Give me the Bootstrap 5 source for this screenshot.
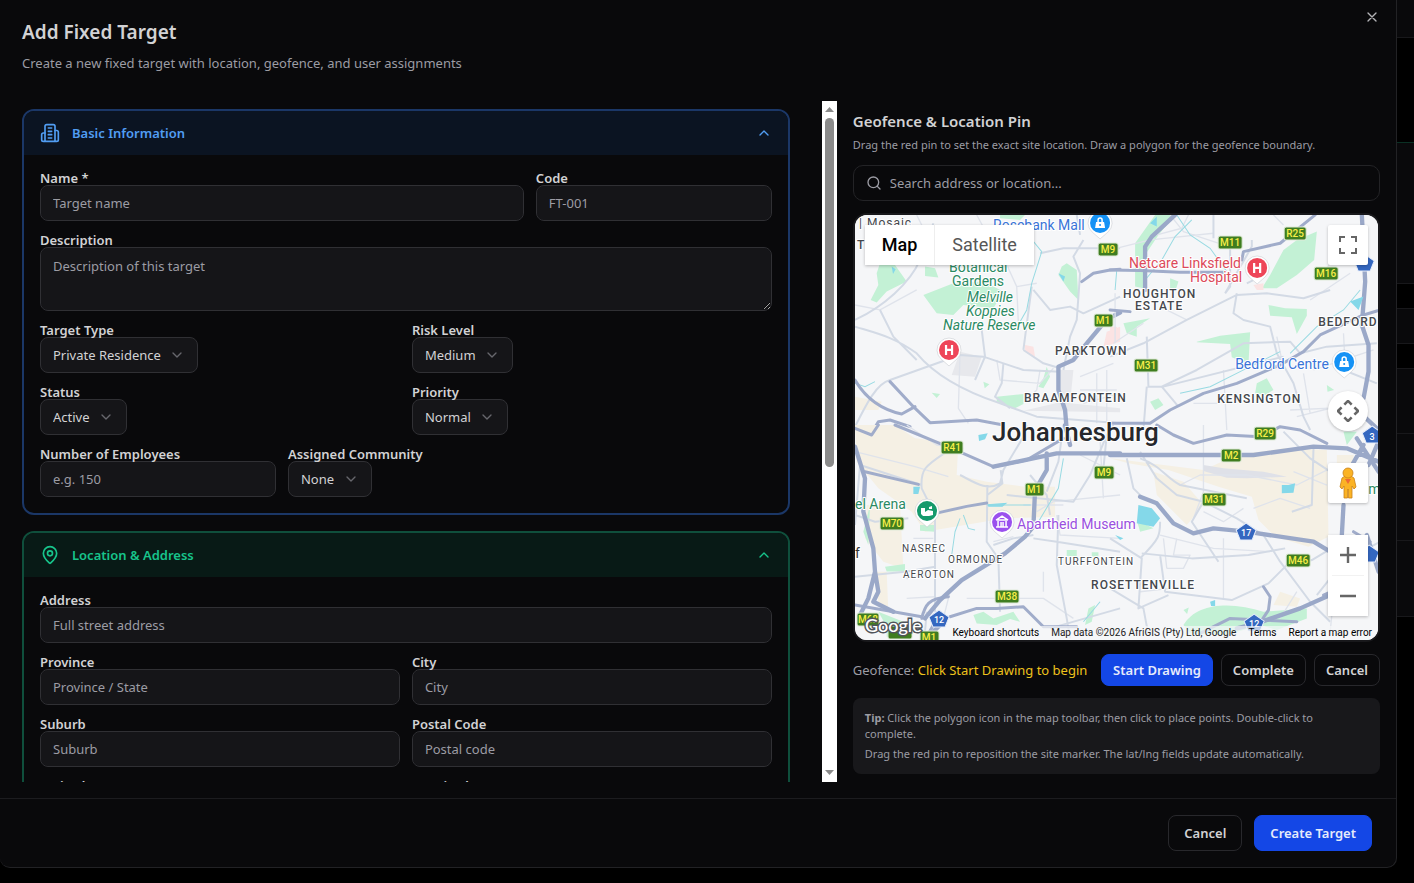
<!DOCTYPE html>
<html lang="en">
<head>
<meta charset="utf-8">
<meta name="viewport" content="width=device-width, initial-scale=1">
<title>Add Fixed Target</title>
<link href="https://cdn.jsdelivr.net/npm/bootstrap@5.3.0/dist/css/bootstrap.min.css" rel="stylesheet">
<style>
  body { background: #000; color: #d2d2d4; font: 13px/20px "Noto Sans", "Open Sans", sans-serif; height: 100vh; overflow: hidden; }
  h1 { font-size: 19px; line-height: 24px; font-weight: 600; }
  h2 { font-size: 15px; line-height: 24px; font-weight: 600; }
  .dialog-box { height: calc(100vh - 15px); min-width: 0; background: #09090b; border: 1px solid #222225; border-width: 0 1px 1px 0; border-radius: 0 0 10px 10px; }
  .dialog-head { padding: 20px 22px 27px; }
  .dialog-head p { line-height: 22px; }
  .dialog-body { min-height: 0; padding: 0 16px 16px 22px; }
  .dialog-foot { border-top: 1px solid #1c1c1f; padding: 16px 24px; gap: 12px; }
  .muted-text { color: #9c9ca4; }
  .small-text { font-size: 11px; line-height: 16px; }
  .close-x { top: 9px; right: 16px; width: 16px; height: 16px; color: #b4b4b8; }
  .form-pane { flex: 0 0 60%; min-width: 0; }
  .form-scroll { overflow-y: auto; scrollbar-width: none; padding: 8px 32px 0 0; min-width: 0; }
  .form-scroll::-webkit-scrollbar { display: none; }
  .map-pane { flex: 0 0 40%; min-width: 0; padding: 8px 0 8px 16px; gap: 12px; }
  .section { border: 2px solid; border-radius: 12px; overflow: hidden; margin-bottom: 16px; }
  .section > button { width: 100%; height: 44px; padding: 0 16px; gap: 12px; border: 0; font-weight: 600; }
  .section-body { padding: 16px; }
  .section-body .row { --bs-gutter-x: 12px; --bs-gutter-y: 12px; }
  .sec-blue { border-color: #1b3767; }
  .sec-blue > button { background: #0b1422; color: #519df2; }
  .sec-green { border-color: #0f4f3c; }
  .sec-green > button { background: #081a16; color: #17c48b; }
  .form-label { display: block; margin: 0; font-weight: 600; line-height: 14px; color: #d2d2d4; white-space: nowrap; }
  .form-control, .form-select { font-size: 13px; line-height: 20px; color: #d2d2d4; background-color: #151518; border: 1px solid #303034; border-radius: 8px; padding: 7px 12px; }
  .form-control::placeholder { color: #9c9ca4; opacity: 1; }
  input.form-control, .form-select { height: 36px; }
  textarea.form-control { height: 64px; padding-top: 8px; }
  .form-select { width: auto; padding-right: 36px; background-position: right 12px center; background-size: 16px 16px; background-image: url("data:image/svg+xml,%3csvg xmlns='http://www.w3.org/2000/svg' viewBox='0 0 24 24' fill='none' stroke='%2367676d' stroke-width='2' stroke-linecap='round' stroke-linejoin='round'%3e%3cpath d='m6 9 6 6 6-6'/%3e%3c/svg%3e"); }
  .search-box { height: 36px; border: 1px solid #232326; border-radius: 10px; padding: 0 12px; gap: 8px; color: #9c9ca4; }
  .search-box input { background: transparent; border: 0; outline: 0; color: #d2d2d4; padding: 0; }
  .search-box input::placeholder { color: #9c9ca4; opacity: 1; }
  .scroll-rail { width: 15px; background: #fff; color: #8b8b8b; }
  .scroll-rail svg { height: 17px; flex: none; }
  .scroll-rail .thumb { height: 54%; width: 9px; border-radius: 5px; background: #8b8b8b; }
  .btn { --bs-btn-font-size: 13px; --bs-btn-line-height: 20px; --bs-btn-font-weight: 600; --bs-btn-border-radius: 8px; --bs-btn-padding-x: 15px; --bs-btn-padding-y: 7px; white-space: nowrap; }
  .tools .btn { --bs-btn-padding-x: 11px; --bs-btn-padding-y: 5px; }
  .btn-line { --bs-btn-color: #d2d2d4; --bs-btn-border-color: #28282c; --bs-btn-hover-color: #fff; --bs-btn-hover-border-color: #444; }
  .btn-go { --bs-btn-color: #e6ebfb; --bs-btn-bg: #1447e6; --bs-btn-border-color: #1447e6; --bs-btn-hover-color: #fff; --bs-btn-hover-bg: #2456f0; }
  .tools { gap: 8px; }
  .warn-text { color: #eec21c; }
  .tip-box { background: #18181b; border-radius: 8px; padding: 12px 24px 12px 12px; }
  .map-frame { min-height: 0; border: 2px solid #18181b; border-radius: 14px; overflow: hidden; background: #f5f6f8; font-family: Roboto, sans-serif; color: #222; }
  .map-frame > svg { width: 100%; height: 100%; display: block; }
  .map-ctl { background: #fff; border: 0; padding: 0; width: 40px; height: 40px; border-radius: 2px; box-shadow: 0 1px 3px rgba(0,0,0,.25); color: #666; display: flex; align-items: center; justify-content: center; }
  .map-type { top: 10px; left: 10px; box-shadow: 0 1px 3px rgba(0,0,0,.25); }
  .map-type button { background: #fff; border: 0; height: 40px; padding: 0 17px; font-size: 18px; color: #565656; }
  .map-type button.on { color: #000; font-weight: 500; border-right: 1px solid #eee; }
  .map-side { top: 10px; right: 10px; bottom: 24px; }
  .map-stack { gap: 32px; }
  .map-zoom { background: #fff; box-shadow: 0 1px 3px rgba(0,0,0,.25); }
  .map-zoom .map-ctl { box-shadow: none; }
  .map-zoom hr { color: #ccc; }
  .map-legal { right: 0; bottom: 0; font-size: 10px; line-height: 14px; background: rgba(245,246,248,.7); padding: 0 6px; gap: 12px; white-space: nowrap; }
  .map-legal a, .map-legal button { color: #000; text-decoration: none; border: 0; background: none; padding: 0; }
  .backdrop { width: 17px; flex: none; }
  .backdrop div { background: #09090b; border-bottom: 1px solid #18181b; }
  .backdrop .dark { background: #000; }
  .areas text { font-size: 12px; font-weight: 500; fill: #44474c; letter-spacing: 1px; }
  .areas .minor { font-size: 10px; font-weight: 400; }
  .halo text { paint-order: stroke; stroke: #fff; stroke-width: 2px; stroke-linejoin: round; }
  .shields rect { fill: #3f7d20; stroke: #dfead8; stroke-width: 1px; }
  .shields text { fill: #f6ee4a; font-size: 10px; font-weight: 500; text-anchor: middle; }
  .pent path { fill: #3467c0; stroke: #e8eefa; stroke-width: 1px; }
  .pent text { fill: #fff; font-size: 9px; font-weight: 500; text-anchor: middle; }
  .places text { font-size: 14px; }
  .road { fill: none; stroke: #d3dae5; stroke-width: 6; stroke-linejoin: round; }
  .thin { fill: none; stroke: #dfe3eb; stroke-width: 4; stroke-linejoin: round; }
  .major { fill: none; stroke: #a0acca; stroke-width: 9; stroke-linejoin: round; stroke-linecap: round; }
  .wide { fill: none; stroke: #9aa8c8; stroke-width: 13; stroke-linejoin: round; stroke-linecap: round; }
  .park { fill: #c3f1d5; }
  .sand { fill: #f5f0e4; }
  .water { fill: #84d8e9; }
  .creek { fill: none; stroke: #98dae2; stroke-width: 3; }
</style>
</head>
<body class="d-flex">

<main class="dialog-box position-relative flex-grow-1 d-flex flex-column" role="dialog" aria-labelledby="dlg-title">
  <button type="button" class="close-x position-absolute border-0 bg-transparent p-0 d-flex" aria-label="Close">
    <svg width="16" height="16" viewBox="0 0 24 24" fill="none" stroke="currentColor" stroke-width="2" stroke-linecap="round"><path d="M18 6 6 18M6 6l12 12"/></svg>
  </button>
  <header class="dialog-head">
    <h1 id="dlg-title" class="mb-2">Add Fixed Target</h1>
    <p class="muted-text mb-0">Create a new fixed target with location, geofence, and user assignments</p>
  </header>

  <div class="dialog-body d-flex flex-grow-1">
    <div class="form-pane d-flex">
      <form id="target-form" class="form-scroll flex-grow-1">
        <section class="section sec-blue">
          <button type="button" class="d-flex align-items-center" aria-expanded="true">
            <svg width="20" height="20" viewBox="0 0 24 24" fill="none" stroke="currentColor" stroke-width="2" stroke-linecap="round" stroke-linejoin="round"><path d="M6 22V4a2 2 0 0 1 2-2h8a2 2 0 0 1 2 2v18Z"/><path d="M6 12H4a2 2 0 0 0-2 2v6a2 2 0 0 0 2 2h2M18 9h2a2 2 0 0 1 2 2v9a2 2 0 0 1-2 2h-2M10 6h4M10 10h4M10 14h4M10 18h4"/></svg>
            <span>Basic Information</span>
            <svg class="ms-auto" width="16" height="16" viewBox="0 0 24 24" fill="none" stroke="currentColor" stroke-width="2" stroke-linecap="round" stroke-linejoin="round"><path d="m18 15-6-6-6 6"/></svg>
          </button>
          <div class="section-body">
            <div class="row">
              <div class="col-8"><label class="form-label" for="f-name">Name *</label><input id="f-name" class="form-control" placeholder="Target name"></div>
              <div class="col-4"><label class="form-label" for="f-code">Code</label><input id="f-code" class="form-control" placeholder="FT-001"></div>
              <div class="col-12"><label class="form-label" for="f-desc">Description</label><textarea id="f-desc" class="form-control d-block" placeholder="Description of this target"></textarea></div>
              <div class="col-6"><label class="form-label" for="f-type">Target Type</label><select id="f-type" class="form-select"><option>Private Residence</option></select></div>
              <div class="col-6"><label class="form-label" for="f-risk">Risk Level</label><select id="f-risk" class="form-select"><option>Medium</option></select></div>
              <div class="col-6"><label class="form-label" for="f-status">Status</label><select id="f-status" class="form-select"><option>Active</option></select></div>
              <div class="col-6"><label class="form-label" for="f-prio">Priority</label><select id="f-prio" class="form-select"><option>Normal</option></select></div>
              <div class="col-4"><label class="form-label" for="f-emp">Number of Employees</label><input id="f-emp" class="form-control" placeholder="e.g. 150"></div>
              <div class="col-4"><label class="form-label" for="f-comm">Assigned Community</label><select id="f-comm" class="form-select"><option>None</option></select></div>
            </div>
          </div>
        </section>

        <section class="section sec-green">
          <button type="button" class="d-flex align-items-center" aria-expanded="true">
            <svg width="20" height="20" viewBox="0 0 24 24" fill="none" stroke="currentColor" stroke-width="2" stroke-linecap="round" stroke-linejoin="round"><path d="M20 10c0 4.993-5.539 10.193-7.399 11.799a1 1 0 0 1-1.202 0C9.539 20.193 4 14.993 4 10a8 8 0 0 1 16 0"/><circle cx="12" cy="10" r="3"/></svg>
            <span>Location &amp; Address</span>
            <svg class="ms-auto" width="16" height="16" viewBox="0 0 24 24" fill="none" stroke="currentColor" stroke-width="2" stroke-linecap="round" stroke-linejoin="round"><path d="m18 15-6-6-6 6"/></svg>
          </button>
          <div class="section-body">
            <div class="row">
              <div class="col-12"><label class="form-label" for="f-addr">Address</label><input id="f-addr" class="form-control" placeholder="Full street address"></div>
              <div class="col-6"><label class="form-label" for="f-prov">Province</label><input id="f-prov" class="form-control" placeholder="Province / State"></div>
              <div class="col-6"><label class="form-label" for="f-city">City</label><input id="f-city" class="form-control" placeholder="City"></div>
              <div class="col-6"><label class="form-label" for="f-sub">Suburb</label><input id="f-sub" class="form-control" placeholder="Suburb"></div>
              <div class="col-6"><label class="form-label" for="f-post">Postal Code</label><input id="f-post" class="form-control" placeholder="Postal code"></div>
              <div class="col-6"><label class="form-label" for="f-lat">Latitude</label><input id="f-lat" class="form-control"></div>
              <div class="col-6"><label class="form-label" for="f-lng">Longitude</label><input id="f-lng" class="form-control"></div>
            </div>
          </div>
        </section>
      </form>
      <div class="scroll-rail flex-shrink-0 d-flex flex-column align-items-center" aria-hidden="true">
        <svg width="15" viewBox="0 0 15 17"><path fill="currentColor" d="M3 11h9L7.500 6z"/></svg>
        <div class="flex-grow-1"><div class="thumb"></div></div>
        <svg width="15" viewBox="0 0 15 17"><path fill="currentColor" d="M3 5h9l-4.500 5z"/></svg>
      </div>
    </div>

    <div class="map-pane d-flex flex-column">
      <div>
        <h2 class="m-0">Geofence &amp; Location Pin</h2>
        <p class="muted-text small-text mb-0 pt-1">Drag the red pin to set the exact site location. Draw a polygon for the geofence boundary.</p>
      </div>
      <div class="search-box d-flex align-items-center flex-shrink-0">
        <svg width="16" height="16" viewBox="0 0 24 24" fill="none" stroke="currentColor" stroke-width="2" stroke-linecap="round"><circle cx="11" cy="11" r="8"/><path d="m21 21-4.300-4.300"/></svg>
        <input type="search" class="flex-grow-1" aria-label="Search address or location" placeholder="Search address or location...">
      </div>

      <div class="map-frame position-relative flex-grow-1">
        <svg viewBox="0 0 523 425" preserveAspectRatio="xMidYMid slice" role="img" aria-label="Map of Johannesburg">
          <rect width="523" height="425" fill="#f5f6f8"/>
          <g transform="scale(.33333)">
            <!-- north-west -->
            <g transform="translate(-15 -15)">
              <path class="park" d="M90 160 135 165 170 215 110 245 80 278 62 270 85 225 80 190zM225 170l30 5 10 28-40-5zM220 255l90-35 90-5 60 30-30 50-90-10-30 30-50-5zM650 160l30 20 5 90-25-25-35-50 10-25zM450 10h80l-20 20-60-5zM440 560l80-8v30l-30 15-50-20zM590 470l10 30-20 35-15-5 15-25zM400 515l18 8-14 12zM245 548l25 4-10 12z"/>
              <path fill="#e7e8ec" d="M330 425 395 440 375 500 305 495zM630 480h40l-10 100 150 15v12l-290-5 110-25z"/>
              <path fill="#fbe3e3" d="M525 405l25 5 5 30-30-15zM770 365l40-15v45l-50 15z"/>
              <path class="sand" d="M15 560l80 15-10 25H15z"/>
              <path class="thin" d="M380 15l30 55 40 50 50 110M500 230l60 -10M500 230l5 110M15 285l75 15 110-60M200 15l30 60M440 450l10 60 120 10 40-45M330 435l-5 160 30 45M570 480l-10 60-30 30M690 500l100-40M690 540h110M700 580l110-30M740 490v150M770 480v160"/>
              <path class="road" d="M15 350C80 370 130 380 200 430C250 490 330 540 450 580L560 620 810 640M15 330C100 290 180 220 210 150L250 40M90 300l40 80 70 70M15 650C50 580 80 520 120 510L330 435 400 440 520 480 630 485M395 360l10 80-30 70M550 240l50 60 60-10 40 20 110-50M700 90l-30 50 20 50-10 140-20 50-20 100M545 230l-25 190M520 420l60 40 50 15M570 130l70-15 170 0M680 15l10 60M460 460l-5 60 -20 40 45 35"/>
              <path class="creek" d="M530 70l45 55-30 95-15 80-20 35M15 520l30 10 30-15M800 180l-5 60"/>
              <path class="major" d="M120 515l70 75 50 48 140-8 80 15M15 510C50 570 100 600 155 612l40-22M70 660l15-25 35-5 60 20M695 215l35-25 50-10 30-2"/>
              <path class="wide" d="M810 308l-40 20-60 72-40 50-45 20v70l20 60 5 60"/>
              <path class="water" d="M625 190l20 10-5 15zM125 170l12 8-8 14z"/>
            </g>
            <!-- north-east -->
            <g transform="translate(765 -15)">
              <path class="park" d="M75 100l60-85h60l-50 60-40 60-5 100-25-5zM480 195 520 120 560 90 620 65 612 150 560 195 500 235 455 235zM180 205l25 10-10 30-15-10zM475 285l50 10 65 2v20l-30 55-15-50-65-5zM260 395l70-18 90-10-5 95-50-20-5-40-100-5zM440 520l30-15 20 35-25 15-30-5zM650 525l22 15-20 5zM120 575l25-10 15 20-25 15zM40 340l80-15-40 25v30l-30-10z"/>
              <path fill="#fbe3e3" d="M0 350h20l5 20-25 10zM430 225l30-5v20h-20z"/>
              <path class="thin" d="M180 15l40 50 120 40M490 15l30 30M15 250l0 150M235 15l-20 40 -95 25M0 120l120-30 190-20M600 270l120-80M700 100l-60 90-30 10M500 380l15 70M700 370l5 100M610 480l180-60M560 620l200-50M540 600l220-10M250 580l80 0M340 480l10 180M580 490l20 120M10 400l90-60M230 330l-80-40"/>
              <path class="road" d="M380 255L230 330 100 400 0 440M345 250l80-140 0-20M380 250l-10 60 30 20 80 20 20 80 50 90 30 100 20 40M380 255l90-5 110 15 80-25M110 380l5 150 40 0 50 60M110 530l-10 130M155 530L260 480 400 400 540 395 570 430 650 410 800 400M310 15v70M160 530l360-90M410 220l60-30M700 480l100 40M360 100v130l-15 20"/>
              <path class="creek" d="M105 210l50-60 40-70 50-50M200 15l40 60 60 40 50 70M210 550l90-20 90-45 120-60M540 430l80-80 80-50 50-60"/>
              <path class="major" d="M0 180l90 2 120 5h130M395 150l5-25 110-25 105-85M0 300l60 5M0 640l120 0 60-40 100-50 100-30 130-55 70-40 50-50 130-60 100-30"/>
              <path class="wide" d="M105 240V110l20-30 70-65M755 15l10 200-10 130 20 60v80l-15 80M730 590l75 70"/>
              <path class="water" d="M720 275l40-15-15 40zM120 40l20-20v30z"/>
            </g>
            <!-- south-west -->
            <g transform="translate(-15 630)">
              <path class="sand" d="M15 0h120l60 40 130 15-5 95 90 20 115 15h90v90l-150 5-240 40-40-60-100-70-65-80zM50 240h100l10 190-60-20-55-70zM80 440h30l5 120-30-20z"/>
              <path class="park" d="M210 300h45v20l-45-3zM105 425l60-8v22h-55zM85 560l75 30-50 15zM370 570l30-10 30 20 60-20 20 30-30-8-40 18-60-5zM650 375h30v18h-30zM725 382h20v12h-20zM715 550l20-10-10 50-20 10zM60 240l-20 80 15 40zM110 610l60-5v30h-60z"/>
              <path class="thin" d="M15 80l180 45 100 30M190 340h60M170 0l90 60 80 10M170 520l85-5M580 440v60M560 260l50-30 200-20M750 50l10 170M690 90l120 60M520 240h120M430 350l60-15M620 270l10 60 180 10M300 500l-20 80M350 520h230l90 60"/>
              <path class="road" d="M290 80c-60 40-80 50-75 110l40 80v290M215 180L30 120 15 300M330 150c40 20 80 50 120 25l10-40 60-100 10-35M412 180l-2 170 35 50 5 160M412 210l45-35-5-40M470 210l200 20 50-80 50-120 20-30M550 340l70 10 190 30M540 150l50 60 10 60M590 200l35-90 15-110M625 270l-5 150 30 160 10 60M15 270l60 20 100-10M15 455l150-15 90 -15M550 330l-60 10-60 20M170 460l60-10M230 560l-5 60M600 610l210-60M760 130l10-100"/>
              <path class="major" d="M135 0l170 70 125 55 100-20 110-65M45 140l160 38M270 262l80-18 60-10M15 540l200 35M250 600l-20 35 M300 575l80-25 60 0 80-5 60 60h100M15 10l50 20 20-30M215 580c10-40 20-60 80-65"/>
              <path class="wide" d="M15 65L45 160 40 260 70 370 75 440 55 520 30 570M430 125l190-40h190M590 85v50l-35 60-5 110-25 30-60 50-130 80-65 60-45 55M645 0l15 60M270 600l-40 40M75 440l10 60-15 30 60 30"/>
              <path class="water" d="M385 30l28-5-8 18-18 5zM190 185h20l-5 22h-15zM412 238l60-5-15 12-42 0z"/>
              <path class="creek" d="M640 100l-15 90-60 100M330 280l-15 40-10 70M340 270l15 40 20 5M700 590l50-60M412 240h130"/>
            </g>
            <!-- south-east -->
            <g transform="translate(765 630)">
              <path class="sand" d="M0 100l280 35 100-45 140-20 130 5 5 260-60 30-100-30-50-50-20-70-100-30-150-50-120-20zM130 140l90 30 60 70-50 60-90-90zM680 90h50v60h-50zM510 500l60 20-10 25-70-5z"/>
              <path class="park" d="M220 600c40-70 150-70 240-40l130-10v30l-90 35-50-15-100 30-110-5zM700 20l40 0-30 40zM220 555l16-8-5 20zM80 285l50 25-40 10z"/>
              <path fill="#dfe1e8" d="M280 120l60 10 120 10 70 15-120 5-60-2-70-20z"/>
              <path class="thin" d="M280 0v200l-30 80M280 260l60 30 60-40M340 340v180M200 340l-10 50 50 0-20 40-50 0M150 330l160 40 170 10M90 500l90-10M430 250l80-30 90 30M210 180l60-30 140 0 150 30 100-50M680 420l-20 200M560 500l-50 80M170 430l-10-90M550 140l100 40"/>
              <path class="road" d="M90 80l50 80 60 50 80 20 100 50 80 50 50 80 90 120 60 60M90 100c60 20 80 60 120 80l200 40M280 230l-35 60 60 90 20 30M0 340l95 60 -10 150 90 -40M150 290c0 40 0 50-60 110M95 385l150 15 170-10 110-20M150 390l15 110 200 25 110-50 60-60M545 420l60 -15 50-30M610 70l-5 170-60 20M50 100l20 90 30 30M0 490l100 60 15 80M520 20l80 80 60 40M620 510l80-100 110-60"/>
              <path class="major" d="M140 0l50 30 60 25 100-25 100 5 60 -30 60 10 80 40M270 625l90-45 200 10M460 485l20 30-5 40-30 45M640 510l90-40M780 350l-50-30"/>
              <path class="wide" d="M0 90h430l180-25 100 5 95 40M90 215l50 20 50 60 60 30 60-15 100 10 200 30 50 30 20 40M380 610l60-15 130-45 90-40M760 60l-40 70M740 40l65 100M700 240l-5 90M770 330l35 110M775 120l30-70"/>
              <path class="water" d="M85 240l40 10 25 30-20 25-50-10zM515 180h20l20-5-5 28-35 2zM15 330l25 10-10 5zM300 530l15-5v18h-12z"/>
            </g>
          </g>

          <g class="pent">
            <g transform="translate(509 48)"><path d="M0-9 10-2 6 8H-6L-10-2Z"/></g>
            <g transform="translate(517 220)"><path d="M0-9 10-2 6 8H-6L-10-2Z"/><text y="5">3</text></g>
            <g transform="translate(391 317)"><path d="M0-9 10-2 6 8H-6L-10-2Z"/><text y="4">17</text></g>
            <g transform="translate(84 404)"><path d="M0-9 10-2 6 8H-6L-10-2Z"/><text y="4">12</text></g>
            <g transform="translate(399 408)"><path d="M0-9 10-2 6 8H-6L-10-2Z"/><text y="4">12</text></g>
            <g transform="translate(514 339)"><path d="M0-9 10-2 6 8H-6L-10-2Z"/></g>
          </g>
          <g class="shields">
            <rect x="243" y="28" width="20" height="13" rx="2"/><text x="253" y="38">M9</text>
            <rect x="363" y="21" width="24" height="13" rx="2"/><text x="375" y="31">M11</text>
            <rect x="429" y="12" width="22" height="13" rx="2"/><text x="440" y="22">R25</text>
            <rect x="459" y="52" width="24" height="13" rx="2"/><text x="471" y="62">M16</text>
            <rect x="239" y="99" width="19" height="13" rx="2"/><text x="248" y="109">M1</text>
            <rect x="279" y="144" width="24" height="13" rx="2"/><text x="291" y="154">M31</text>
            <rect x="86" y="226" width="22" height="13" rx="2"/><text x="97" y="236">R41</text>
            <rect x="399" y="212" width="22" height="13" rx="2"/><text x="410" y="222">R29</text>
            <rect x="366" y="234" width="20" height="13" rx="2"/><text x="376" y="244">M2</text>
            <rect x="239" y="251" width="20" height="13" rx="2"/><text x="249" y="261">M9</text>
            <rect x="170" y="268" width="19" height="13" rx="2"/><text x="179" y="278">M1</text>
            <rect x="347" y="278" width="24" height="13" rx="2"/><text x="359" y="288">M31</text>
            <rect x="25" y="302" width="24" height="13" rx="2"/><text x="37" y="312">M70</text>
            <rect x="431" y="339" width="24" height="13" rx="2"/><text x="443" y="349">M46</text>
            <rect x="140" y="375" width="24" height="13" rx="2"/><text x="152" y="385">M38</text>
            <rect x="2" y="398" width="22" height="13" rx="2"/><text x="13" y="408">M68</text>
            <rect x="33" y="411" width="24" height="13" rx="2"/>
            <rect x="65" y="416" width="19" height="13" rx="2"/><text x="74" y="426">M1</text>
          </g>
          <g class="areas halo">
            <text x="4" y="12" style="font-weight:400">| Mosaic</text><text x="2" y="34">T</text>
            <text x="268" y="83">HOUGHTON</text><text x="280" y="95">ESTATE</text>
            <text x="463" y="111">BEDFORD</text><text x="200" y="140">PARKTOWN</text>
            <text x="169" y="187">BRAAMFONTEIN</text><text x="362" y="188">KENSINGTON</text>
            <text x="236" y="374">ROSETTENVILLE</text>
            <text class="minor" x="47" y="337">NASREC</text><text class="minor" x="93" y="348">ORMONDE</text>
            <text class="minor" x="48" y="363">AEROTON</text><text class="minor" x="203" y="350">TURFFONTEIN</text>
          </g>
          <g class="places halo">
            <text x="138" y="15" fill="#3a74d8">Rosebank Mall</text>
            <g fill="#2b8a63"><text x="94" y="57">Botanical</text><text x="97" y="71">Gardens</text>
            <g font-style="italic"><text x="112" y="87">Melville</text><text x="111" y="101">Koppies</text><text x="88" y="115">Nature Reserve</text></g>
            <text x="0" y="294">el Arena</text><text x="513" y="279">m</text></g>
            <g fill="#dc4a5a"><text x="274" y="53">Netcare Linksfield</text><text x="335" y="67">Hospital</text></g>
            <text x="380" y="154" fill="#3a74d8">Bedford Centre</text>
            <text x="162" y="314" fill="#9a50e0">Apartheid Museum</text>
            <text x="0" y="343" fill="#333">f</text>
          </g>
          <g class="halo"><text x="137" y="226" font-size="26" font-weight="500" fill="#26282c">Johannesburg</text></g>

          <defs><path id="pin" d="M0 16 -8 9A12 12 0 1 1 8 9Z" fill="#fff" stroke="#c9ccd2" stroke-width=".6"/></defs>
          <g transform="translate(245 8)"><use href="#pin"/><circle r="10" fill="#1592f5"/><path d="M-4-1h8l1 6H-5z" fill="#fff"/><path d="M-2-1v-2a2 2 0 0 1 4 0v2" fill="none" stroke="#fff" stroke-width="1.500"/><circle cy="2" r="1" fill="#1592f5"/></g>
          <g transform="translate(489 147)"><use href="#pin"/><circle r="10" fill="#1592f5"/><path d="M-4-1h8l1 6H-5z" fill="#fff"/><path d="M-2-1v-2a2 2 0 0 1 4 0v2" fill="none" stroke="#fff" stroke-width="1.500"/><circle cy="2" r="1" fill="#1592f5"/></g>
          <g transform="translate(402 53)"><use href="#pin"/><circle r="10" fill="#ee4558"/><path d="M-3-5v10M3-5v10M-3 0h6" stroke="#fff" stroke-width="2.200"/></g>
          <g transform="translate(94 135)"><use href="#pin"/><circle r="10" fill="#ee4558"/><path d="M-3-5v10M3-5v10M-3 0h6" stroke="#fff" stroke-width="2.200"/></g>
          <g transform="translate(72 296)"><use href="#pin"/><circle r="10" fill="#159a6c"/><path d="M-6-3h4v4l3-2 5 1v4l-4 1h-6l-2-2zM2-4l3-1v3H2z" fill="#fff"/></g>
          <g transform="translate(147 307)"><use href="#pin"/><circle r="10" fill="#9a50ee"/><path d="m-6-2 6-4 6 4M-5-2H5M-4-1v6M4-1v6M-1 0v5M1 0v5M-6 5H6" fill="none" stroke="#fff" stroke-width="1.500"/></g>
          <text x="10" y="417" font-size="18" font-weight="500" fill="#fff" stroke="#50545a" stroke-width="3" paint-order="stroke" font-family="Lato">Google</text>
        </svg>

        <div class="map-type position-absolute d-flex"><button type="button" class="on">Map</button><button type="button">Satellite</button></div>
        <div class="map-side position-absolute d-flex flex-column justify-content-between">
          <button type="button" class="map-ctl" aria-label="Toggle fullscreen view"><svg width="18" height="18" viewBox="0 0 18 18" fill="none" stroke="currentColor" stroke-width="2"><path d="M1 6V1h5M12 1h5v5M17 12v5h-5M6 17H1v-5"/></svg></button>
          <div class="map-stack d-flex flex-column">
            <button type="button" class="map-ctl rounded-circle" aria-label="Map camera controls"><svg width="22" height="22" viewBox="0 0 24 24" fill="none" stroke="currentColor" stroke-width="2.800"><path d="m8 5 4-4 4 4M8 19l4 4 4-4M5 8l-4 4 4 4M19 8l4 4-4 4"/></svg></button>
            <button type="button" class="map-ctl" aria-label="Street View"><svg width="18" height="32" viewBox="0 0 18 32" stroke="#c8821a" stroke-width=".8" fill="#fbb325"><path d="M3 11 1 20l2 2 2-3 0 12h3.500l.5-9 .5 9H13V19l2 3 2-2-2-9-3-2H6z"/><circle cx="9" cy="6" r="5"/><path d="m6 12 3 5 3-5z" fill="#ee6a34" stroke="none"/></svg></button>
            <div class="map-zoom">
              <button type="button" class="map-ctl" aria-label="Zoom in"><svg width="18" height="18" viewBox="0 0 18 18" stroke="currentColor" stroke-width="2.400"><path d="M1 9h16M9 1v16"/></svg></button>
              <hr class="my-0 mx-1">
              <button type="button" class="map-ctl" aria-label="Zoom out"><svg width="18" height="18" viewBox="0 0 18 18" stroke="currentColor" stroke-width="2.400"><path d="M1 9h16"/></svg></button>
            </div>
          </div>
        </div>
        <div class="map-legal position-absolute d-flex">
          <button type="button">Keyboard shortcuts</button><span>Map data ©2026 AfriGIS (Pty) Ltd, Google</span><a href="#terms">Terms</a><a href="#report">Report a map error</a>
        </div>
      </div>

      <div class="tools d-flex align-items-center">
        <div class="flex-grow-1 text-nowrap"><span class="muted-text">Geofence:</span> <span class="warn-text">Click Start Drawing to begin</span></div>
        <button type="button" class="btn btn-go">Start Drawing</button>
        <button type="button" class="btn btn-line">Complete</button>
        <button type="button" class="btn btn-line">Cancel</button>
      </div>
      <div class="tip-box muted-text small-text">
        <p class="mb-1"><strong>Tip:</strong> Click the polygon icon in the map toolbar, then click to place points. Double-click to complete.</p>
        <p class="mb-0">Drag the red pin to reposition the site marker. The lat/lng fields update automatically.</p>
      </div>
    </div>
  </div>

  <footer class="dialog-foot d-flex justify-content-end">
    <button type="button" class="btn btn-line">Cancel</button>
    <button type="submit" form="target-form" class="btn btn-go">Create Target</button>
  </footer>
</main>

<aside class="backdrop d-flex flex-column" aria-hidden="true">
  <div style="height:38px"></div>
  <div class="dark" style="height:105px;border-color:#0a3024"></div>
  <div style="height:141px"></div>
  <div class="dark" style="height:25px"></div>
  <div style="height:35px"></div>
  <div class="dark" style="height:25px"></div>
  <div style="height:65px"></div>
  <div style="height:53px"></div>
  <div style="height:54px"></div>
  <div style="height:76px"></div>
</aside>

<script src="https://cdn.jsdelivr.net/npm/bootstrap@5.3.0/dist/js/bootstrap.bundle.min.js"></script>
</body>
</html>
